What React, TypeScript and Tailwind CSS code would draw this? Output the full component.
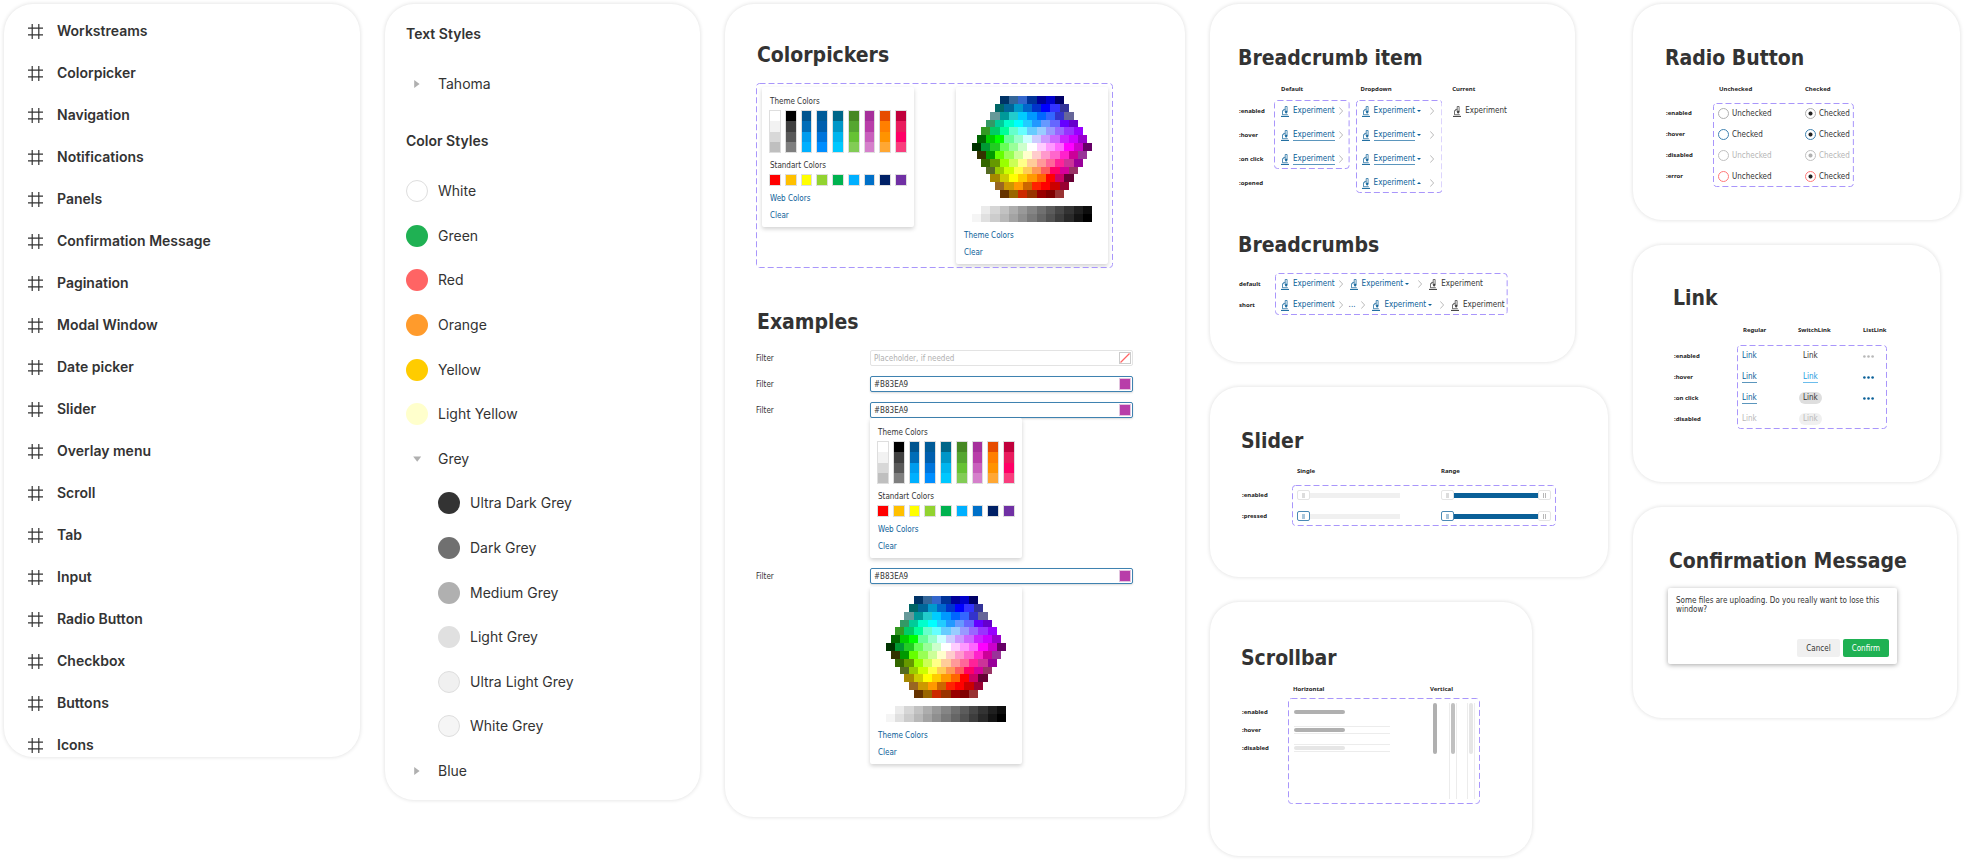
import type { ReactNode } from "react";

const FRAMES = [
  "Workstreams", "Colorpicker", "Navigation", "Notifications", "Panels", "Confirmation Message",
  "Pagination", "Modal Window", "Date picker", "Slider", "Overlay menu", "Scroll", "Tab", "Input",
  "Radio Button", "Checkbox", "Buttons", "Icons",
];

const THEME = [
  ["#ffffff", "#f2f2f2", "#d8d8d8", "#bfbfbf"],
  ["#000000", "#3f3f3f", "#595959", "#7f7f7f"],
  ["#00548f", "#006db8", "#009cee", "#00b0ff"],
  ["#005b98", "#005fae", "#0075db", "#008eff"],
  ["#006688", "#0096c7", "#00b5ee", "#00c8ff"],
  ["#468823", "#55a630", "#66c233", "#82cc55"],
  ["#a6309b", "#b83ea9", "#c85fbc", "#d580cb"],
  ["#e64c00", "#ff7f00", "#ff9300", "#ffa733"],
  ["#c0003c", "#e91b5d", "#ff0066", "#f93d7d"],
];

const STANDARD = ["#ff0000", "#ffc000", "#ffff00", "#92d330", "#00b24f", "#00b0ff", "#0070c8", "#002066", "#7030a4"];

const HEX = [
  "003366 336699 3366cc 003399 000099 0000cc 000066",
  "006666 006699 0099cc 0066cc 0033cc 0000ff 3333ff 333399",
  "669999 009999 22cccc 00ccff 0099ff 0066ff 3366ff 3333cc 666699",
  "339966 00cc99 00ffcc 00ffff 22ccff 2299ff 6699ff 6666ff 6600ff 6600cc",
  "339922 00cc66 00ff99 66ffcc 66ffff 66ccff 99ccff 9999ff 9966ff 9933ff 9900ff",
  "006600 00cc00 00ff00 66ff99 99ffcc ccffff ccccff cc99ff cc66ff cc22ff cc00ff 9900cc",
  "003300 009933 22cc22 66ff55 99ff99 ccffcc ffffff ffccff ff99ff ff66ff ff00ff cc00cc 660066",
  "333300 009900 66ff00 99ff55 ccff99 ffffcc ffcccc ff99cc ff66cc ff22cc cc0099 993399",
  "336600 669900 99ff00 ccff55 ffff88 ffcc99 ff9999 ff6699 ff2299 cc3399 990099",
  "556b22 99cc00 ccff00 ffff44 ffcc55 ff9955 ff5c5c ff0066 d6009b 993366",
  "a58800 cccc00 ffff00 ffcc00 ff9900 ff6600 ff0000 cc0066 660033",
  "996622 cc9900 ff9900 cc6600 ff2200 ff0000 cc0000 990033",
  "663300 996600 cc2900 993300 990000 800000 993333",
].map((row) => row.split(" "));

const GREYS = [
  ["#ffffff", "#ebebeb", "#d6d6d6", "#c2c2c2", "#adadad", "#999999", "#858585", "#707070", "#5c5c5c", "#474747", "#333333", "#1f1f1f", "#0d0d0d"],
  ["#f5f5f5", "#e0e0e0", "#cccccc", "#b8b8b8", "#a3a3a3", "#8f8f8f", "#7a7a7a", "#666666", "#525252", "#3d3d3d", "#292929", "#141414", "#000000"],
];

const LINK = "text-[#0a6098]";

function Card({ className = "", children }: { className?: string; children: ReactNode }) {
  return (
    <section className={`overflow-hidden rounded-[29px] bg-white shadow-[0_0_4px_rgba(0,0,0,0.14)] ${className}`}>
      {children}
    </section>
  );
}

function Title({ className = "", children }: { className?: string; children: ReactNode }) {
  return (
    <h2 className={`text-[21px] leading-[28px] font-bold whitespace-nowrap text-[#333333] ${className}`}>
      {children}
    </h2>
  );
}

function Tiny({ className = "", children }: { className?: string; children: ReactNode }) {
  return (
    <div className={`font-['Noto_Sans',sans-serif] text-[6px] leading-[8px] font-bold whitespace-nowrap text-[#222222] ${className}`}>
      {children}
    </div>
  );
}

function States({ names, className = "" }: { names: string[]; className?: string }) {
  return (
    <div className={`flex shrink-0 flex-col pl-px ${className}`}>
      {names.map((n) => (
        <Tiny key={n} className="flex h-3 items-center">{n}</Tiny>
      ))}
    </div>
  );
}

function Dashed({ className = "", children }: { className?: string; children: ReactNode }) {
  return (
    <div className={`relative ${className}`}>
      <svg className="pointer-events-none absolute inset-0 h-full w-full" aria-hidden="true">
        <rect x="0.5" y="0.5" rx="3" className="h-[calc(100%-1px)] w-[calc(100%-1px)]" fill="none" stroke="#a996fb" strokeDasharray="6 3" />
      </svg>
      {children}
    </div>
  );
}

function FrameIcon() {
  return (
    <svg viewBox="0 0 15 15" className="h-[15px] w-[15px]" fill="none" stroke="#333" strokeWidth="1.2" aria-hidden="true">
      <path d="M4.2 0v15M10.8 0v15M0 4.2h15M0 10.8h15" />
    </svg>
  );
}

function Arrow({ open = false }: { open?: boolean }) {
  return (
    <svg viewBox="0 0 22 22" className="h-[22px] w-[22px]" fill="#b0b0b0" aria-hidden="true">
      <path d={open ? "M7.2 8.5h8L11.2 13.8z" : "M8.2 7v8l5.4-4z"} />
    </svg>
  );
}

function Swatch({ name, color, ring = false }: { name: string; color: string; ring?: boolean }) {
  return (
    <li className="flex h-[22px] items-center gap-[10px]">
      <span
        className={`h-[22px] w-[22px] rounded-full ${ring ? "border border-[#dedede]" : ""}`}
        style={{ backgroundColor: color }}
      />
      {name}
    </li>
  );
}

function Group({ name, open = false }: { name: string; open?: boolean }) {
  return (
    <button type="button" aria-expanded={open} className="flex h-[22px] items-center gap-[10px]">
      <Arrow open={open} />
      {name}
    </button>
  );
}

function ThemePanel() {
  return (
    <div className="w-[152px] rounded-[2px] bg-white px-[7px] pt-[9px] pb-[5px] text-[8px] leading-[12px] shadow-[0_2px_4px_rgba(0,0,0,0.18)]">
      <p className="pl-px">Theme Colors</p>
      <div className="mt-[2px] grid grid-cols-9 gap-1">
        {THEME.map((col) => (
          <div key={col[0]} className="flex h-[43px] flex-col border border-[#dedede]">
            {col.map((c) => (
              <button key={c} type="button" aria-label={c} className="flex-1" style={{ backgroundColor: c }} />
            ))}
          </div>
        ))}
      </div>
      <p className="mt-[7px] pl-px">Standart Colors</p>
      <div className="mt-[2px] grid grid-cols-9 gap-1">
        {STANDARD.map((c) => (
          <button key={c} type="button" aria-label={c} className="h-3 border border-[#dedede]" style={{ backgroundColor: c }} />
        ))}
      </div>
      <button type="button" className={`mt-[7px] block pl-px ${LINK}`}>Web Colors</button>
      <button type="button" className={`mt-[5px] block pl-px ${LINK}`}>Clear</button>
    </div>
  );
}

function WebPanel() {
  return (
    <div className="w-[152px] rounded-[2px] bg-white px-2 pt-[9px] pb-[5px] text-[8px] leading-[12px] shadow-[0_2px_4px_rgba(0,0,0,0.18)]">
      <svg viewBox="0 0 130 130" preserveAspectRatio="none" shapeRendering="crispEdges" className="mx-auto h-[102px] w-[120px]" role="img" aria-label="Web colors">
        {HEX.map((row, y) =>
          row.map((c, x) => (
            <rect key={`${y}-${x}`} x={(13 - row.length) * 5 + x * 10} y={y * 10} width="10" height="10" fill={`#${c}`} />
          )),
        )}
      </svg>
      <svg viewBox="0 0 130 20" preserveAspectRatio="none" shapeRendering="crispEdges" className="mx-auto mt-2 h-4 w-[120px]" role="img" aria-label="Grey shades">
        {GREYS.map((row, y) => row.map((c, x) => <rect key={c} x={x * 10} y={y * 10} width="10" height="10" fill={c} />))}
      </svg>
      <button type="button" className={`mt-2 block ${LINK}`}>Theme Colors</button>
      <button type="button" className={`mt-[5px] block ${LINK}`}>Clear</button>
    </div>
  );
}

function Filter({ id, value, active = false, children }: { id: string; value?: string; active?: boolean; children?: ReactNode }) {
  return (
    <div className="flex text-[8px]">
      <label htmlFor={id} className="h-4 w-[114px] shrink-0 pt-px leading-[16px]">Filter</label>
      <div className="flex-1">
        <div
          className={`flex h-4 items-center rounded-[2px] border bg-white pr-[1px] pl-[3px] ${
            active ? "border-[#3f82b0] shadow-[0_1px_2px_rgba(0,0,0,0.15)]" : "border-[#e3e3e3]"
          }`}
        >
          <input
            id={id}
            type="text"
            defaultValue={value}
            placeholder="Placeholder, if needed"
            className="h-[14px] min-w-0 flex-1 bg-transparent pt-px leading-[12px] outline-none placeholder:text-[#b0b0b0]"
          />
          {value ? (
            <button type="button" aria-label={value} className="h-3 w-3 border border-[#e3c4df] bg-[#b83ea9]" />
          ) : (
            <button type="button" aria-label="No color" className="h-3 w-3 border border-[#cccccc]">
              <svg viewBox="0 0 10 10" className="h-[10px] w-[10px]" stroke="#ff6464" strokeWidth="1.2" aria-hidden="true">
                <path d="M0.5 9.5L9.5 0.5" />
              </svg>
            </button>
          )}
        </div>
        {children}
      </div>
    </div>
  );
}

function Microscope() {
  return (
    <svg viewBox="0 0 8 11" className="h-[11px] w-2 shrink-0" fill="none" stroke="currentColor" strokeWidth="0.7" aria-hidden="true">
      <path d="M0 10.4H8" strokeWidth="1" />
      <path d="M1.4 8.7H6.8M4.2 0.5H6.1V6L5.2 7.4L4.2 6ZM4.2 3.4H2.6V4.6H1.5V8.7" />
      <path d="M4.7 5h1v1.6h-1z" fill="currentColor" />
    </svg>
  );
}

function Chevron({ className = "" }: { className?: string }) {
  return (
    <svg viewBox="0 0 4 8" className={`h-2 w-1 shrink-0 ${className}`} fill="none" stroke="#a8a8a8" strokeWidth="0.8" aria-hidden="true">
      <path d="M0.3 0.4L3.6 4L0.3 7.6" />
    </svg>
  );
}

function Crumb({ kind = "link", underline = false, up = false, className = "" }: { kind?: "link" | "menu" | "current"; underline?: boolean; up?: boolean; className?: string }) {
  const label = <span className={`border-b pt-px leading-[10px] ${underline ? "border-[#5b96bd]" : "border-transparent"}`}>Experiment</span>;
  const base = `flex h-3 shrink-0 items-center gap-1 text-[8px] ${className}`;
  if (kind === "current") {
    return <span aria-current="page" className={`${base} text-[#333333]`}><Microscope />{label}</span>;
  }
  if (kind === "menu") {
    return (
      <button type="button" aria-expanded={up} className={`${base} ${LINK}`}>
        <Microscope />
        {label}
        <svg viewBox="0 0 4 2" className="-ml-[2px] h-[2px] w-1" fill="currentColor" aria-hidden="true">
          <path d={up ? "M0 2h4L2 0z" : "M0 0h4L2 2z"} />
        </svg>
      </button>
    );
  }
  return <a href="#experiment" className={`${base} ${LINK}`}><Microscope />{label}</a>;
}

const THUMB =
  "[&::-webkit-slider-thumb]:h-[10px] [&::-webkit-slider-thumb]:w-[13px] [&::-webkit-slider-thumb]:appearance-none [&::-webkit-slider-thumb]:rounded-[2px] [&::-webkit-slider-thumb]:border [&::-webkit-slider-thumb]:bg-white [&::-webkit-slider-thumb]:bg-center [&::-webkit-slider-thumb]:bg-no-repeat";
const THUMB_IDLE =
  "[&::-webkit-slider-thumb]:border-[#e4e4e4] [&::-webkit-slider-thumb]:bg-[linear-gradient(#dcdcdc,#dcdcdc)] [&::-webkit-slider-thumb]:bg-[length:3px_5px]";
const THUMB_PRESSED =
  "[&::-webkit-slider-thumb]:border-[#4a8ab5] [&::-webkit-slider-thumb]:bg-[linear-gradient(#a9c6da,#a9c6da)] [&::-webkit-slider-thumb]:bg-[length:3px_5px]";
const THUMB_END =
  "[&::-webkit-slider-thumb]:border-[#e4e4e4] [&::-webkit-slider-thumb]:bg-[linear-gradient(90deg,#b8b8b8_1px,#ffffff_1px,#ffffff_2px,#b8b8b8_2px)] [&::-webkit-slider-thumb]:bg-[length:3px_5px]";

function SliderRow({ pressed = false }: { pressed?: boolean }) {
  const first = pressed ? THUMB_PRESSED : THUMB_IDLE;
  const state = pressed ? "pressed" : "enabled";
  return (
    <div className="flex h-3 items-center gap-[41px]">
      <input
        type="range"
        aria-label={`Single ${state}`}
        defaultValue={0}
        className={`h-[10px] w-[103px] appearance-none bg-[linear-gradient(#f0f0f0,#f0f0f0)] bg-[length:100%_5px] bg-center bg-no-repeat ${THUMB} ${first}`}
      />
      <div className="grid w-[110px]">
        <input
          type="range"
          aria-label={`Range start ${state}`}
          defaultValue={0}
          className={`col-start-1 row-start-1 h-[10px] w-full appearance-none bg-[linear-gradient(#0a6098,#0a6098)] bg-[length:100%_5px] bg-center bg-no-repeat ${THUMB} ${first}`}
        />
        <input
          type="range"
          aria-label={`Range end ${state}`}
          defaultValue={100}
          className={`pointer-events-none col-start-1 row-start-1 h-[10px] w-full appearance-none bg-transparent [&::-webkit-slider-thumb]:pointer-events-auto ${THUMB} ${THUMB_END}`}
        />
      </div>
    </div>
  );
}

function Radio({ name, label, tone, checked = false }: { name: string; label: string; tone: "enabled" | "hover" | "disabled" | "error"; checked?: boolean }) {
  const border = { enabled: "border-[#b0b0b0]", hover: "border-[#3f82b0]", disabled: "border-[#c0c0c0]", error: "border-[#ff7a7a]" }[tone];
  const off = tone === "disabled";
  return (
    <label className={`flex h-3 items-center gap-[3px] text-[8px] ${off ? "text-[#b5b5b5]" : ""}`}>
      <input
        type="radio"
        name={name}
        defaultChecked={checked}
        disabled={off}
        className={`h-[11px] w-[11px] appearance-none rounded-full border bg-white ${border} ${
          off
            ? "checked:bg-[radial-gradient(circle,#b0b0b0_1.6px,transparent_2.4px)]"
            : "checked:bg-[radial-gradient(circle,#222222_1.6px,transparent_2.4px)]"
        }`}
      />
      <span className="pt-px">{label}</span>
    </label>
  );
}

function Dots({ className }: { className: string }) {
  return (
    <button type="button" aria-label="More" className={`block ${className}`}>
      <svg viewBox="0 0 11 3" className="h-[3px] w-[11px]" fill="currentColor" aria-hidden="true">
        <circle cx="1.4" cy="1.5" r="1.3" />
        <circle cx="5.5" cy="1.5" r="1.3" />
        <circle cx="9.6" cy="1.5" r="1.3" />
      </svg>
    </button>
  );
}

function ScrollBar({ vertical = false, rail, thumb }: { vertical?: boolean; rail: string; thumb: string }) {
  return vertical ? (
    <div className={`flex h-24 w-2 justify-center border-x ${rail}`}>
      <div className={`h-[51px] w-1 rounded-full ${thumb}`} />
    </div>
  ) : (
    <div className={`flex h-2 w-24 items-center border-y ${rail}`}>
      <div className={`h-1 w-[51px] rounded-full ${thumb}`} />
    </div>
  );
}

export default function App() {
  return (
    <main className="grid min-h-screen grid-cols-[minmax(0,356fr)_minmax(0,315fr)_minmax(0,460fr)_minmax(0,398fr)_minmax(0,327fr)] items-start gap-[25px] bg-white pt-1 pr-[5px] pb-1 pl-1 font-['DejaVu_Sans_Condensed','DejaVu_Sans',sans-serif] text-[#333333]">
      <Card className="pt-[17px] pb-[2px] pl-[24px]">
        <ul className="flex flex-col gap-[22px] font-['Inter',sans-serif] text-[14px] leading-[20px] font-semibold">
          {FRAMES.map((name) => (
            <li key={name}>
              <a href={`#${name.toLowerCase().replace(" ", "-")}`} className="flex items-center gap-[14px]">
                <FrameIcon />
                {name}
              </a>
            </li>
          ))}
        </ul>
      </Card>

      <Card className="pt-[19px] pb-[18px] pl-[21px] font-['Inter',sans-serif] text-[14px] leading-[22px]">
        <h3 className="font-semibold">Text Styles</h3>
        <div className="mt-7">
          <Group name="Tahoma" />
        </div>
        <h3 className="mt-[35px] font-semibold">Color Styles</h3>
        <ul className="mt-7 flex h-[602px] flex-col justify-between">
          <Swatch name="White" color="#ffffff" ring />
          <Swatch name="Green" color="#1fb153" />
          <Swatch name="Red" color="#ff6464" />
          <Swatch name="Orange" color="#ff9b2c" />
          <Swatch name="Yellow" color="#ffcc00" />
          <Swatch name="Light Yellow" color="#ffffcc" />
          <li><Group name="Grey" open /></li>
          <li>
            <ul className="flex h-[245px] flex-col justify-between pl-8">
              <Swatch name="Ultra Dark Grey" color="#333333" />
              <Swatch name="Dark Grey" color="#707070" />
              <Swatch name="Medium Grey" color="#b0b0b0" />
              <Swatch name="Light Grey" color="#e0e0e0" />
              <Swatch name="Ultra Light Grey" color="#f0f0f0" ring />
              <Swatch name="White Grey" color="#f5f5f5" ring />
            </ul>
          </li>
          <li><Group name="Blue" /></li>
        </ul>
      </Card>

      <Card className="pt-[37px] pb-[53px] pl-[31px]">
        <Title className="pl-px">Colorpickers</Title>
        <Dashed className="mt-[14px] flex w-fit items-start gap-[42px] pt-1 pr-[5px] pb-1 pl-[6px]">
          <ThemePanel />
          <WebPanel />
        </Dashed>
        <Title className="mt-10 pl-px">Examples</Title>
        <div className="mt-[14px] flex flex-col gap-[10px] pr-[52px]">
          <Filter id="filter-1" />
          <Filter id="filter-2" value="#B83EA9" active />
          <Filter id="filter-3" value="#B83EA9" active>
            <ThemePanel />
          </Filter>
          <Filter id="filter-4" value="#B83EA9" active>
            <div className="mt-[3px]">
              <WebPanel />
            </div>
          </Filter>
        </div>
      </Card>

      <div className="flex flex-col gap-[25px]">
        <Card className="w-11/12 pt-10 pb-[47px] pl-7">
          <Title>Breadcrumb item</Title>
          <div className="mt-[13px] flex items-start">
            <States names={[":enabled", ":hover", ":on click", ":opened"]} className="w-9 gap-3 pt-5" />
            <div>
              <Tiny className="pl-[7px]">Default</Tiny>
              <Dashed className="mt-[7px] flex flex-col gap-3 px-[7px] pt-[5px] pb-1">
                {[false, true, true].map((u, i) => (
                  <div key={i} className="flex items-center">
                    <Crumb underline={u} />
                    <Chevron className="ml-1" />
                  </div>
                ))}
              </Dashed>
            </div>
            <div className="ml-[6px]">
              <Tiny className="pl-[5px]">Dropdown</Tiny>
              <Dashed className="mt-[7px] flex flex-col gap-3 pt-[5px] pr-2 pb-1 pl-[6px]">
                {[false, true, true, false].map((u, i) => (
                  <div key={i} className="flex items-center">
                    <Crumb kind="menu" underline={u} up={i === 3} />
                    <Chevron className="ml-[9px]" />
                  </div>
                ))}
              </Dashed>
            </div>
            <div className="ml-[10px]">
              <Tiny>Current</Tiny>
              <Crumb kind="current" className="mt-3 pl-px" />
            </div>
          </div>
          <Title className="mt-[38px]">Breadcrumbs</Title>
          <div className="mt-[14px] flex items-start">
            <States names={["default", "short"]} className="w-[37px] gap-[9px] pt-[5px]" />
            <Dashed className="flex flex-col gap-[9px] pt-[5px] pr-[3px] pb-1 pl-[6px]">
              <div className="flex items-center">
                <Crumb />
                <Chevron className="ml-1" />
                <Crumb kind="menu" className="ml-[7px]" />
                <Chevron className="ml-[9px]" />
                <Crumb kind="current" className="ml-[7px]" />
              </div>
              <div className="flex items-center">
                <Crumb />
                <Chevron className="ml-1" />
                <button type="button" aria-label="Show hidden items" className={`ml-[6px] h-3 text-[8px] leading-[12px] ${LINK}`}>...</button>
                <Chevron className="ml-[6px]" />
                <Crumb kind="menu" className="ml-[7px]" />
                <Chevron className="ml-2" />
                <Crumb kind="current" className="ml-[7px]" />
              </div>
            </Dashed>
          </div>
        </Card>

        <Card className="pt-10 pb-[51px] pl-[31px]">
          <Title>Slider</Title>
          <div className="mt-3 flex pl-[56px]">
            <Tiny className="w-36">Single</Tiny>
            <Tiny>Range</Tiny>
          </div>
          <div className="mt-[10px] flex items-start">
            <States names={[":enabled", ":pressed"]} className="w-[51px] gap-[9px] pt-1" />
            <Dashed className="flex flex-col gap-[9px] px-[5px] py-1">
              <SliderRow />
              <SliderRow pressed />
            </Dashed>
          </div>
        </Card>

        <Card className="w-[81%] pt-[42px] pb-[52px] pl-[31px]">
          <Title>Scrollbar</Title>
          <div className="mt-[13px] flex pl-[52px]">
            <Tiny className="w-[137px]">Horizontal</Tiny>
            <Tiny>Vertical</Tiny>
          </div>
          <div className="mt-[5px] flex items-start">
            <States names={[":enabled", ":hover", ":disabled"]} className="w-[47px] gap-[6px] pt-2" />
            <Dashed className="flex items-start gap-[41px] py-[5px] pr-[5px] pl-[6px]">
              <div className="flex flex-col gap-[10px] pt-[5px]">
                <ScrollBar rail="border-transparent" thumb="bg-[#b0b0b0]" />
                <ScrollBar rail="border-[#ececec]" thumb="bg-[#b0b0b0]" />
                <ScrollBar rail="border-[#ececec]" thumb="bg-[#e6e6e6]" />
              </div>
              <div className="flex gap-[10px]">
                <ScrollBar vertical rail="border-transparent" thumb="bg-[#b0b0b0]" />
                <ScrollBar vertical rail="border-[#ececec]" thumb="bg-[#c0c0c0]" />
                <ScrollBar vertical rail="border-[#ececec]" thumb="bg-[#e6e6e6]" />
              </div>
            </Dashed>
          </div>
        </Card>
      </div>

      <div className="flex flex-col gap-[25px]">
        <Card className="pt-10 pb-[33px] pl-8">
          <Title>Radio Button</Title>
          <div className="mt-[13px] flex pl-[54px]">
            <Tiny className="w-[86px]">Unchecked</Tiny>
            <Tiny>Checked</Tiny>
          </div>
          <div className="mt-[10px] flex items-start">
            <States names={[":enabled", ":hover", ":disabled", ":error"]} className="w-12 gap-[9px] pt-1" />
            <Dashed className="flex gap-8 pt-1 pr-1 pb-[5px] pl-[5px]">
              <div className="flex w-[55px] flex-col gap-[9px]">
                <Radio name="off-enabled" label="Unchecked" tone="enabled" />
                <Radio name="off-hover" label="Checked" tone="hover" />
                <Radio name="off-disabled" label="Unchecked" tone="disabled" />
                <Radio name="off-error" label="Unchecked" tone="error" />
              </div>
              <div className="flex flex-col gap-[9px]">
                <Radio name="on-enabled" label="Checked" tone="enabled" checked />
                <Radio name="on-hover" label="Checked" tone="hover" checked />
                <Radio name="on-disabled" label="Checked" tone="disabled" checked />
                <Radio name="on-error" label="Checked" tone="error" checked />
              </div>
            </Dashed>
          </div>
        </Card>

        <Card className="w-[94%] pt-[39px] pb-[53px] pl-10">
          <Title>Link</Title>
          <div className="mt-[14px] flex pl-[70px]">
            <Tiny className="w-[55px]">Regular</Tiny>
            <Tiny className="w-[65px]">SwitchLink</Tiny>
            <Tiny>ListLink</Tiny>
          </div>
          <div className="mt-[11px] flex items-start">
            <States names={[":enabled", ":hover", ":on click", ":disabled"]} className="w-16 gap-[9px] pt-[5px]" />
            <Dashed className="flex pt-[5px] pr-[13px] pb-1 pl-[5px] text-[8px] leading-[12px]">
              <div className="flex w-[57px] flex-col items-start gap-[9px]">
                <a href="#link" className={`h-3 ${LINK}`}>Link</a>
                <a href="#link" className={`h-3 border-b border-[#5b96bd] leading-[12px] ${LINK}`}>Link</a>
                <a href="#link" className={`h-3 border-b border-[#5b96bd] leading-[12px] ${LINK}`}>Link</a>
                <span className="h-3 text-[#b8b8b8]">Link</span>
              </div>
              <div className="flex w-16 flex-col items-start gap-[9px]">
                <button type="button" className="h-3 px-1">Link</button>
                <button type="button" className="h-3 px-1 text-[#1e9be0]">
                  <span className="block h-3 border-b border-[#6cbdec]">Link</span>
                </button>
                <button type="button" className="h-3 rounded-full bg-[#dedede] px-1">Link</button>
                <button type="button" disabled className="h-3 rounded-full bg-[#f0f0f0] px-1 text-[#b8b8b8]">Link</button>
              </div>
              <div className="flex flex-col gap-[9px]">
                <div className="flex h-3 items-center"><Dots className="text-[#b8b8b8]" /></div>
                <div className="flex h-3 items-center"><Dots className={LINK} /></div>
                <div className="flex h-3 items-center"><Dots className={LINK} /></div>
              </div>
            </Dashed>
          </div>
        </Card>

        <Card className="w-[99%] pt-10 pb-[54px] pl-[35px]">
          <Title className="pl-px">Confirmation Message</Title>
          <div role="dialog" aria-label="Confirmation" className="mt-[13px] w-[229px] rounded-[2px] bg-white px-2 pt-2 pb-[7px] text-[8px] shadow-[0_1px_5px_rgba(0,0,0,0.35)]">
            <p className="leading-[9px]">Some files are uploading. Do you really want to lose this window?</p>
            <div className="mt-[25px] flex justify-end gap-[3px]">
              <button type="button" className="h-[18px] rounded-[2px] bg-[#f0f0f0] px-[9px] pt-px">Cancel</button>
              <button type="button" className="h-[18px] rounded-[2px] bg-[#1fb153] px-[9px] pt-px text-white">Confirm</button>
            </div>
          </div>
        </Card>
      </div>
    </main>
  );
}
